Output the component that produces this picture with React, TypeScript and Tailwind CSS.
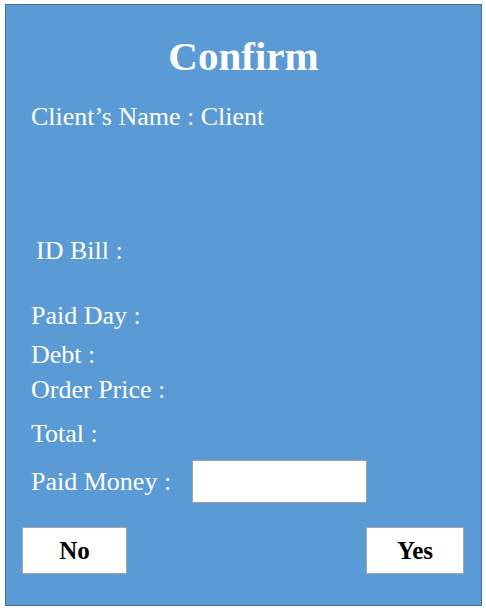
export default function App() {
  const serif = { fontFamily: '"Liberation Serif", "Times New Roman", serif' };
  return (
    <div className="w-[486px] h-[613px] bg-white pt-[4px] pl-[5px]" style={serif}>
      <div className="w-[477px] h-[602px] border border-[#41719c] bg-[#5b9bd5] flex flex-col text-white">
        <h1 className="mt-[27px] text-center text-[41px] leading-[48px] font-bold">Confirm</h1>

        <div className="pl-[25px] text-[26px] leading-[30px] flex flex-col">
          <p className="mt-[22px]">Client’s Name : Client</p>
          <p className="mt-[104px] pl-[5px]">ID Bill :</p>
          <p className="mt-[35px]">Paid Day :</p>
          <p className="mt-[9px]">Debt :</p>
          <p className="mt-[5px]">Order Price :</p>
          <p className="mt-[14px]">Total :</p>
          <div className="mt-[11px] flex items-center">
            <span className="w-[161px]">Paid Money :</span>
            <input
              type="text"
              className="w-[175px] h-[43px] bg-white border border-[#a0a0a0] outline-none text-black px-2 text-[20px]"
            />
          </div>
        </div>

        <div className="mt-[24px] pl-[16px] pr-[17px] flex justify-between">
          <button className="w-[105px] h-[47px] bg-white border border-[#a6a6a6] text-black text-[25px] font-bold">
            No
          </button>
          <button className="w-[98px] h-[47px] bg-white border border-[#a6a6a6] text-black text-[25px] font-bold">
            Yes
          </button>
        </div>
      </div>
    </div>
  );
}
